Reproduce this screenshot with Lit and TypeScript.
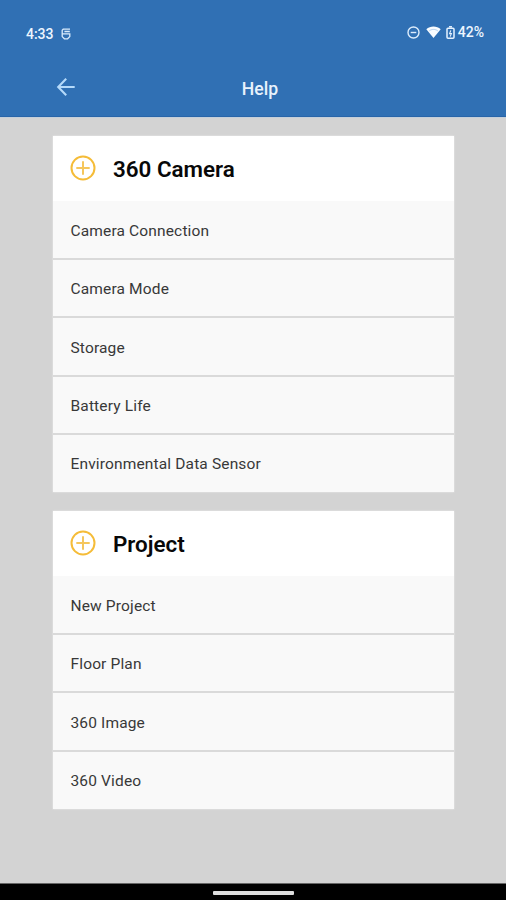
import { LitElement, html, css } from "lit";
import { customElement, property } from "lit/decorators.js";

@customElement("status-bar")
class StatusBar extends LitElement {
  static styles = css`
    :host { display: flex; height: 60px; padding: 8px 22px 0 26px; box-sizing: border-box;
      align-items: center; color: #edf6ff; font: 500 14px/16px Roboto, sans-serif; }
    .time { margin-right: 8px; letter-spacing: -0.05px; }
    .spacer { flex: 1; }
    .dnd { margin-right: 6px; }
    .wifi { margin-right: 5px; }
    .battery { margin-right: 3px; }
    .level { margin-top: -4px; }
    svg { display: block; margin-top: -4px; }
    .app { margin-top: 0; }
  `;
  render() {
    return html`
      <span class="time">4:33</span>
      <svg class="app" width="10" height="12" viewBox="0 0 10 12" fill="none" stroke="#d9ebfc" stroke-width="1.3">
        <path d="M9 1.2H2.2L1.2 2.2V8.6L3.4 10.8H6.6L8.8 8.6V5.8H1.2M3.4 3.5H8.8" />
      </svg>
      <span class="spacer"></span>
      <svg class="dnd" width="13" height="13" viewBox="0 0 13 13" fill="none" stroke="#dcecfc" stroke-width="1.4">
        <circle cx="6.5" cy="6.5" r="5.5" /><path d="M3.7 6.5H9.3" />
      </svg>
      <svg class="wifi" width="15" height="12" viewBox="0 0 15 12">
        <path d="M.3 3.2C4.2-.3 10.8-.3 14.7 3.2L7.5 12Z" fill="#f8fcff" />
        <path d="M3.2 4.9C5.8 2.9 9.2 2.9 11.8 4.9" fill="none" stroke="#a9cbed" stroke-width=".9" />
      </svg>
      <svg class="battery" width="9" height="13" viewBox="0 0 9 13" fill="none" stroke="#e5f2ff" stroke-width="1.5">
        <rect x="1" y="2.2" width="7" height="10" rx="1" /><path d="M3 .8H6" />
        <path d="M4.8 4.4L3.6 7.6H5.4L4.2 10.6" stroke-width="1.1" />
      </svg>
      <span class="level">42%</span>
    `;
  }
}

@customElement("app-header")
class AppHeader extends LitElement {
  static styles = css`
    :host { display: grid; grid-template-columns: 1fr auto 1fr; height: 57px; align-items: center;
      box-sizing: border-box; padding: 0 0 1px 56px; color: #e8f2fc; }
    .back { display: block; margin-top: -3px; }
    .title { font: 500 17.6px/22px Roboto, sans-serif; margin: 2px 42px 0 0; }
  `;
  render() {
    return html`
      <svg class="back" width="20" height="20" viewBox="0 0 20 20" fill="none" stroke="#b5dafa" stroke-width="2.1">
        <path d="M10.2 1.7L2.2 10L10.2 18.3M2.5 10H18.7" />
      </svg>
      <span class="title">Help</span>
    `;
  }
}

@customElement("help-section")
class HelpSection extends LitElement {
  @property() heading = "";
  @property({ attribute: false }) items: string[] = [];
  static styles = css`
    :host { display: block; background: #fff; box-shadow: 0 0 1.5px #f4f4f4; font-family: Roboto, sans-serif; }
    .head { display: flex; align-items: center; height: 65px; padding-left: 17px; }
    .plus { display: block; margin-right: 17px; margin-top: -1px; }
    .heading { font-size: 22.4px; line-height: 28px; font-weight: 600; color: #080808; margin-top: 1.5px; }
    .rows { background: #f9f9f9; padding-top: .7px; }
    .row { display: flex; align-items: center; height: 58.3px; box-sizing: border-box; padding: 2.3px 17.5px 0;
      border-bottom: 2px solid #dadada; color: #383838; font-size: 15.5px; letter-spacing: .15px; }
    .row:last-child { height: 57px; border-bottom-color: #f9f9f9; padding-top: 3.6px; }
  `;
  render() {
    return html`
      <div class="head">
        <svg class="plus" width="26" height="26" viewBox="0 0 26 26" fill="none" stroke="#f5bc38" stroke-width="2">
          <circle cx="13" cy="13" r="11.5" /><path d="M6.3 13H19.7M13 6.3V19.7" stroke="#f5c65c" />
        </svg>
        <span class="heading">${this.heading}</span>
      </div>
      <div class="rows">${this.items.map((i) => html`<div class="row">${i}</div>`)}</div>
    `;
  }
}

@customElement("app-root")
class AppRoot extends LitElement {
  static styles = css`
    :host { display: flex; flex-direction: column; height: 900px; background: #d3d3d3; }
    .top { background: #3070b4; height: 117px; flex: none; box-sizing: border-box; border-bottom: 1px solid #2865a9; }
    .content { flex: 1; display: flex; flex-direction: column; gap: 19.3px; padding: 18px 52px 0 53px;
      border-top: 1px solid #c4cfda; box-sizing: border-box; }
    .nav { height: 17px; flex: none; background: #000; box-sizing: border-box; border-top: 1px solid #666;
      display: flex; justify-content: center; padding-top: 7px; }
    .handle { width: 81px; height: 4px; border-radius: 1px; background: #dedede; }
  `;
  render() {
    return html`
      <div class="top"><status-bar></status-bar><app-header></app-header></div>
      <div class="content">
        <help-section heading="360 Camera" .items=${["Camera Connection", "Camera Mode", "Storage", "Battery Life", "Environmental Data Sensor"]}></help-section>
        <help-section heading="Project" .items=${["New Project", "Floor Plan", "360 Image", "360 Video"]}></help-section>
      </div>
      <div class="nav"><div class="handle"></div></div>
    `;
  }
}
